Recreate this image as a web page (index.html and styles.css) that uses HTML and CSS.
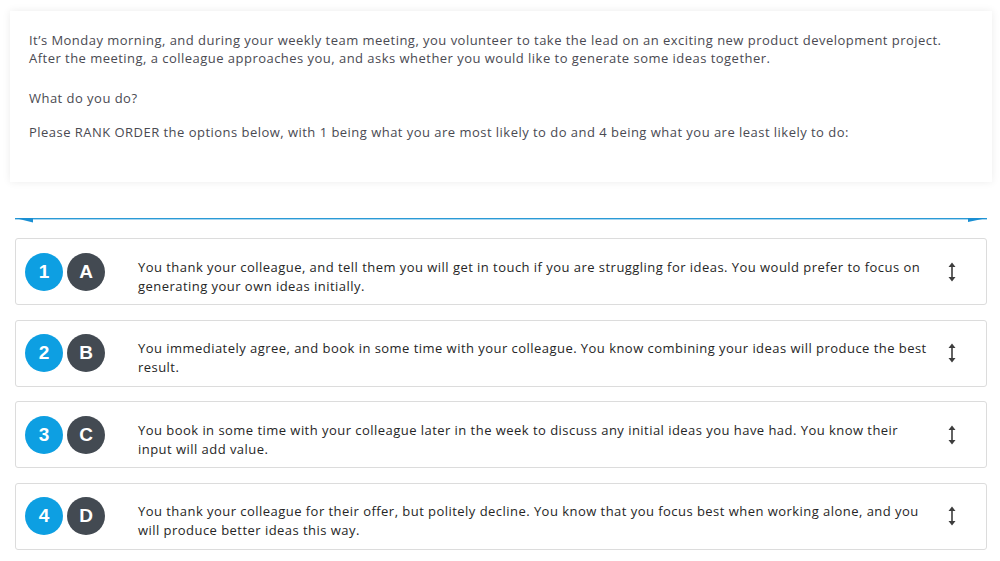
FILE: index.html
```html
<!DOCTYPE html>
<html>
<head>
<meta charset="utf-8">
<link rel="stylesheet" href="styles.css">
</head>
<body>
<div class="question">
  <p>It’s Monday morning, and during your weekly team meeting, you volunteer to take the lead on an exciting new product development project.<br>After the meeting, a colleague approaches you, and asks whether you would like to generate some ideas together.</p>
  <p class="q2">What do you do?</p>
  <p class="q3">Please RANK ORDER the options below, with 1 being what you are most likely to do and 4 being what you are least likely to do:</p>
</div>
<div class="divider">
  <svg width="972" height="6" viewBox="0 0 972 6">
    <rect x="0" y="0" width="972" height="1.4" fill="#2a9ad6"/>
    <polygon points="0,0 18,0 18,4.5" fill="#1a8fd3"/>
    <polygon points="953,0 972,0 953,4" fill="#1a8fd3"/>
  </svg>
</div>
<div class="options">
  <div class="card">
    <span class="num">1</span><span class="let">A</span>
    <div class="txt">You thank your colleague, and tell them you will get in touch if you are struggling for ideas. You would prefer to focus on generating your own ideas initially.</div>
    <svg class="drag" width="8" height="20" viewBox="0 0 8 20"><path d="M4 3V17" stroke="#3d3d3d" stroke-width="1.6"/><path d="M0.5 5L4 0.5L7.5 5Z M0.5 15L4 19.5L7.5 15Z" fill="#3d3d3d"/></svg>
  </div>
  <div class="card">
    <span class="num">2</span><span class="let">B</span>
    <div class="txt">You immediately agree, and book in some time with your colleague. You know combining your ideas will produce the best result.</div>
    <svg class="drag" width="8" height="20" viewBox="0 0 8 20"><path d="M4 3V17" stroke="#3d3d3d" stroke-width="1.6"/><path d="M0.5 5L4 0.5L7.5 5Z M0.5 15L4 19.5L7.5 15Z" fill="#3d3d3d"/></svg>
  </div>
  <div class="card">
    <span class="num">3</span><span class="let">C</span>
    <div class="txt">You book in some time with your colleague later in the week to discuss any initial ideas you have had. You know their input will add value.</div>
    <svg class="drag" width="8" height="20" viewBox="0 0 8 20"><path d="M4 3V17" stroke="#3d3d3d" stroke-width="1.6"/><path d="M0.5 5L4 0.5L7.5 5Z M0.5 15L4 19.5L7.5 15Z" fill="#3d3d3d"/></svg>
  </div>
  <div class="card">
    <span class="num">4</span><span class="let">D</span>
    <div class="txt">You thank your colleague for their offer, but politely decline. You know that you focus best when working alone, and you will produce better ideas this way.</div>
    <svg class="drag" width="8" height="20" viewBox="0 0 8 20"><path d="M4 3V17" stroke="#3d3d3d" stroke-width="1.6"/><path d="M0.5 5L4 0.5L7.5 5Z M0.5 15L4 19.5L7.5 15Z" fill="#3d3d3d"/></svg>
  </div>
</div>
</body>
</html>
```
FILE: styles.css
```css
html, body {
  margin: 0;
  padding: 0;
  background: #ffffff;
}
body {
  padding: 11px 8px 0 10px;
  font-family: "Open Sans", "Liberation Sans", sans-serif;
}
.question {
  background: #fff;
  box-shadow: 0 0 8px rgba(0,0,0,0.08);
  padding: 20px 19px 41px 19px;
  color: #4a4a52;
  font-size: 13px;
  letter-spacing: 0.47px;
  line-height: 18px;
}
.question p {
  margin: 0;
}
.question .q2 {
  margin-top: 22px;
}
.question .q3 {
  margin-top: 16px;
}
.divider {
  margin: 36px 5px 0 5px;
  height: 6px;
}
.divider svg {
  display: block;
}
.options {
  margin: 14px 5px 0 5px;
  display: flex;
  flex-direction: column;
  gap: 14.5px;
}
.card {
  height: 65px;
  border: 1px solid #dcdcdc;
  border-radius: 3px;
  display: flex;
  align-items: center;
  padding: 0 30px 0 9px;
  background: #fff;
}
.num, .let {
  width: 38px;
  height: 38px;
  border-radius: 50%;
  display: flex;
  align-items: center;
  justify-content: center;
  color: #fff;
  font-family: "Liberation Sans", Arial, sans-serif;
  font-weight: bold;
  font-size: 19px;
  flex: none;
}
.num {
  background: #0d9fe2;
}
.let {
  background: #434a52;
  margin-left: 4px;
}
.txt {
  margin-left: 33px;
  flex: 1;
  color: #262626;
  font-size: 13px;
  font-weight: 500;
  letter-spacing: 0.46px;
  line-height: 19px;
  padding-top: 10px;
  padding-right: 16px;
}
.drag {
  flex: none;
  display: block;
}
```
